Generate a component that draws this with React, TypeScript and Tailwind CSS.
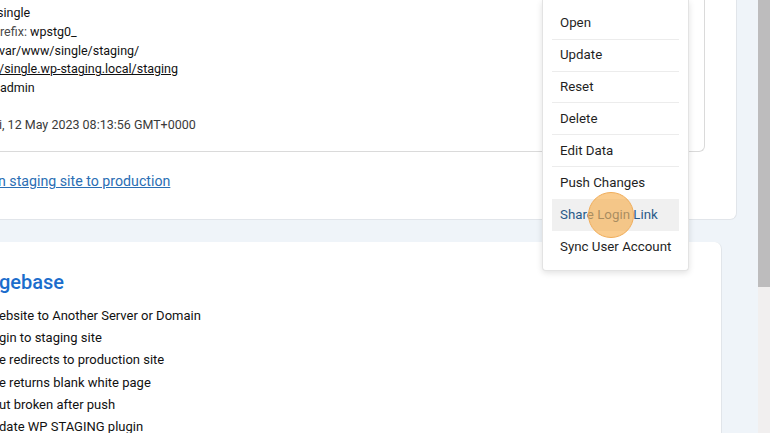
const details = [
  { label: "", value: "single", shift: "-ml-[3px]" },
  { label: "refix: ", value: "wpstg0_", shift: "" },
  { label: "", value: "var/www/single/staging/", shift: "-ml-[1px]" },
  { label: "", value: "/single.wp-staging.local/staging", shift: "-ml-[1px]", link: true },
  { label: " ", value: "admin", shift: "" },
];

const articles = [
  "ebsite to Another Server or Domain",
  "gin to staging site",
  "e redirects to production site",
  "e returns blank white page",
  "ut broken after push",
  "date WP STAGING plugin",
];

const menuItems = [
  "Open",
  "Update",
  "Reset",
  "Delete",
  "Edit Data",
  "Push Changes",
  "Share Login Link",
  "Sync User Account",
];

function ActionsMenu() {
  return (
    <div className="absolute left-[542px] top-0 w-[147px] h-[271px] bg-white border border-t-0 border-[#e3e3e3] rounded-b-[4px] shadow-[0_2px_6px_rgba(0,0,0,0.12)] pt-[8px] px-[9px]">
      {menuItems.map((item, i) => {
        const active = item === "Share Login Link";
        return (
          <div
            key={item}
            className={`h-[31.8px] flex items-center pl-[8px] text-[13.3px] whitespace-nowrap ${
              i < menuItems.length - 1 && !active && menuItems[i + 1] !== "Share Login Link"
                ? "border-b border-[#ececec]"
                : ""
            } ${active ? "bg-[#f0f0f0] text-[#285a88]" : "text-[#1f1f1f]"}`}
          >
            {item}
          </div>
        );
      })}
      <div className="absolute left-[45px] top-[192px] w-[46px] h-[46px] rounded-full bg-[rgba(247,172,72,0.62)] border border-[#f0ad5a]" />
    </div>
  );
}

export default function App() {
  return (
    <div
      className="relative w-[770px] h-[433px] overflow-hidden flex bg-[#eff4f9]"
      style={{ fontFamily: "Roboto, 'Liberation Sans', sans-serif" }}
    >
      <div className="flex-1 flex flex-col">
        <div className="w-[737px] h-[220px] shrink-0 bg-white border-r border-b border-[#e1e5ea] rounded-br-[7px]">
          <div className="w-[705px] h-[152px] border-r border-b border-[#dadada] rounded-br-[6px] pt-[4px] text-[12.5px] leading-[18.8px]">
            {details.map((d) => (
              <div key={d.value} className={`whitespace-nowrap ${d.shift}`}>
                <span className="text-[#4a4a4a]">{d.label}</span>
                <span className={`text-[#111] ${d.link ? "underline" : ""}`}>{d.value}</span>
              </div>
            ))}
            <div className="h-[18px]" />
            <div className="whitespace-nowrap text-[#3a3a3a] -ml-[1px]">
              i, 12 May 2023 08:13:56 GMT+0000
            </div>
          </div>
          <div className="pt-[17px] -ml-[2px]">
            <a className="text-[14.2px] text-[#2a6eb4] underline whitespace-nowrap">
              n staging site to production
            </a>
          </div>
        </div>

        <div className="mt-[22px] w-[722px] flex-1 bg-white rounded-tr-[7px] border-r border-[#e1e5ea]">
          <h2 className="mt-[27px] -ml-[1px] text-[20px] leading-[26px] font-medium text-[#1b6dcc]">
            gebase
          </h2>
          <ul className="mt-[10px] text-[13px] leading-[22.2px] text-[#111]">
            {articles.map((a) => (
              <li key={a} className="whitespace-nowrap -ml-[1px]">
                {a}
              </li>
            ))}
          </ul>
        </div>
      </div>

      <div className="w-[12px] flex flex-col">
        <div className="h-[287px] bg-[#bdbcbd]" />
        <div className="flex-1 bg-[#f1efef]" />
      </div>

      <div className="absolute left-[603px] top-0 w-[85px] h-[3px] bg-[#e6f3f1]" />
      <ActionsMenu />
    </div>
  );
}
